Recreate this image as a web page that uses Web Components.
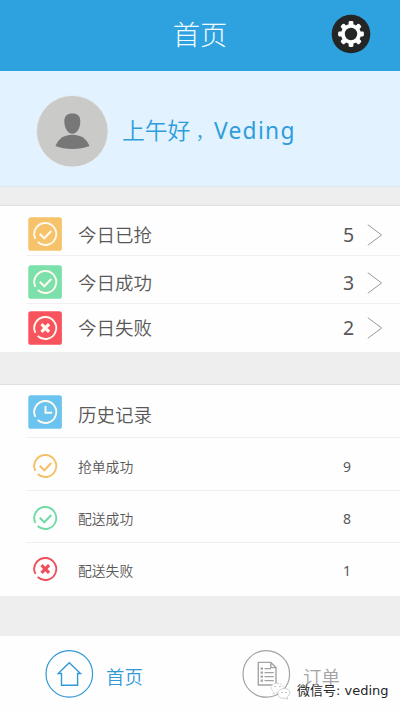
<!DOCTYPE html>
<html lang="zh-CN">
<head>
<meta charset="utf-8">
<title>首页</title>
<style>
html,body{margin:0;height:100%;overflow:hidden}
body{font-family:"Noto Sans","Noto Sans CJK SC",sans-serif;font-weight:350;color:#595757;background:#eeeeef}
</style>
</head>
<body>
<home-app></home-app>
<script>
const define = (name, css, html) => customElements.define(name, class extends HTMLElement {
  connectedCallback() {
    if (this.shadowRoot) return;
    const root = this.attachShadow({ mode: 'open' });
    root.innerHTML = `<style>:host{display:block;box-sizing:border-box}*{box-sizing:border-box}svg{display:block;flex:none}${css}</style>` +
      (typeof html === 'function' ? html(this) : html);
  }
});

const ring = '<path d="M-9.9 4.9A11 11 0 1 1 -7.6 8" />';
const marks = {
  check: '<path d="M-5.5 -.2L-1 4.2L6 -3" stroke-width="2.1"/>',
  cross: '<path d="M-3.8 -3.8L3.8 3.8M3.8 -3.8L-3.8 3.8" stroke-width="3.2"/>',
  clock: '<path d="M.2 -6V.7H6.8" stroke-width="1.9"/>'
};

define('status-icon', ':host{width:34px;height:34px}', el => {
  const filled = el.hasAttribute('filled'), c = el.getAttribute('color');
  return `<svg width="34" height="34" viewBox="-17.3 -17 34 34" fill="none">
    ${filled ? `<rect x="-17" y="-16.8" width="33.6" height="33.6" rx="2.6" fill="${c}"/>` : ''}
    <g stroke="${filled ? '#fff9ef' : c}" stroke-width="1.9">${ring}${marks[el.getAttribute('mark')]}</g></svg>`;
});

define('app-header',
  `:host{height:71px;background:#2ea2df;color:#f2faff;display:grid;grid-template-columns:1fr auto 1fr;align-items:center;padding-bottom:3px}
   .t{grid-column:2;font-size:27.3px;line-height:40px;font-weight:300;padding-top:1px}
   svg{justify-self:end;margin-right:29px}`,
  () => {
    let teeth = '';
    for (let i = 0; i < 8; i++) teeth += `<rect x="-2.4" y="-12.9" width="4.8" height="6" rx="1.3" transform="rotate(${i * 45})"/>`;
    return `<div class="t"><slot></slot></div>
    <svg width="40" height="40" viewBox="-20 -20 40 40"><circle r="19.3" fill="#242625"/>
    <g fill="#fff"><circle r="10"/>${teeth}</g><circle r="6.2" fill="#242625"/></svg>`;
  });

define('user-greeting',
  `:host{height:116px;background:#e2f2ff;border-bottom:1px solid #dce8f2;display:flex;align-items:center;padding:6px 0 0 36px;color:#2f9ddb}
   .g{margin-left:13px;padding-bottom:1px;font-size:22.8px;line-height:32px;white-space:nowrap}
   ::slotted(.comma){display:inline-block;width:18.5px;font-size:18.5px;margin-left:5px}
   ::slotted(.name){display:inline-block;font-weight:400;letter-spacing:1.3px}`,
  `<svg width="73" height="73" viewBox="0 0 73 73"><circle cx="36.3" cy="36.3" r="35.8" fill="#cacac9" stroke="#e9f0f5" stroke-width=".8"/>
   <path d="M28.3 26.5C28.2 21 31.4 18.4 36.4 18.4S44.5 21 44.3 26.5C44.2 33 41.2 38.8 36.4 38.8S28.5 33 28.3 26.5Z" fill="#777"/>
   <path d="M19.4 51C23 43 28.5 39.8 36.4 39.8S50 43 53.5 51C44 55 29 55 19.4 51Z" fill="#777"/></svg>
   <div class="g"><slot></slot></div>`);

define('list-card', ':host{background:#fefefe;box-shadow:0 -1px 1px #e0dfe2}', '<slot></slot>');

define('list-row',
  `:host{display:grid;grid-template-columns:78px 1fr 70px;align-items:start;height:var(--h);line-height:28px;font-size:18.5px}
   :host([line]){background:linear-gradient(#f1eff1,#f1eff1) right bottom/calc(100% - 26px) 1.5px no-repeat}
   :host([small]){font-size:13.8px}
   .i{padding:var(--i) 0 0 28px}
   .l,.n{padding-top:var(--t)}
   .n{display:flex;align-items:center;font-size:19.5px;font-weight:400;padding-left:13px}
   :host([small]) .n{font-size:14px}
   ::slotted([slot=count]){font-weight:400}
   .n svg{margin-left:13px}`,
  el => `<div class="i"><slot name="icon"></slot></div><div class="l"><slot></slot></div><div class="n"><slot name="count"></slot>${
    el.hasAttribute('arrow') ? '<svg width="16" height="22" viewBox="0 0 16 22" fill="none" stroke="#999" stroke-width="1"><path d="M.8 .7L14.6 11L.8 21.3"/></svg>' : ''}</div>`);

define('tab-item',
  `:host{display:flex;align-items:flex-start;font-size:18.4px;line-height:28px}
   .l{margin:14px 0 0 12px}`,
  el => `<svg width="49" height="49" viewBox="0 0 49 49" fill="none" stroke="currentColor" stroke-width="1.2"><circle cx="24.3" cy="24.9" r="23.3"/>${
    el.getAttribute('icon') === 'home'
      ? '<path d="M16.5 24.5H13.2L24.3 13.7L35.5 24.5H32.6V36.2H16.5Z" stroke-width="1.4"/>'
      : '<path d="M16.3 13.4H28.8L34 18.6V36H16.3ZM28.8 13.4V18.6H34" stroke-width="1.4"/><path d="M22.5 19.6H29M22.5 23.6H31.8M22.5 27.6H31.8M22.5 31.6H31.8" stroke-width="1.2"/><path d="M18.6 19.6H21M18.6 23.6H21M18.6 27.6H21M18.6 31.6H21" stroke-width="2.2"/>'
  }</svg><div class="l"><slot></slot></div>`);

define('tab-bar',
  ':host{height:75px;background:#fefefe;display:grid;grid-template-columns:197px 1fr;padding:13px 0 0 45px}',
  '<slot></slot>');

define('account-mark',
  `:host{position:absolute;left:270px;top:681px;display:flex;align-items:center;color:#242424;font:13px/20px "DejaVu Sans","Noto Sans CJK SC",sans-serif;white-space:nowrap}
   .t{margin-left:6px}`,
  `<svg width="21" height="20" viewBox="0 0 21 20" fill="#fff" stroke="#bbb" stroke-width=".7"><path d="M3 13.2L3.4 10.7C-.8 7 1.2 2.3 7 2.3S14.8 6 13.5 9.4 7 12.2 5.5 11.6Z" stroke-dasharray="2 1"/><path d="M17.5 18.3L15.5 17C10.7 18.3 7.5 15.5 8 11.9S13 6.8 17 8 20.5 13.5 17.2 16Z"/><path d="M5 5V6M10 5V6M12 11V12M16 11V12" stroke="#aaa" stroke-width="1.4"/></svg>
   <div class="t"><slot></slot></div>`);

define('home-app',
  `:host{width:400px;height:711px;position:relative;display:flex;flex-direction:column}
   :host>*{flex:none}
   .today{margin-top:19px;height:146px}
   .history{margin-top:33px;height:211px}
   tab-bar{margin-top:40px}`,
  `<app-header>首页</app-header>
   <user-greeting>上午好<span class="comma">，</span><span class="name">Veding</span></user-greeting>
   <list-card class="today">
     <list-row arrow line style="--h:50px;--i:10.5px;--t:14.6px"><status-icon slot="icon" filled mark="check" color="#f6c36b"></status-icon>今日已抢<span slot="count">5</span></list-row>
     <list-row arrow line style="--h:48px;--i:9px;--t:13px"><status-icon slot="icon" filled mark="check" color="#7ce0aa"></status-icon>今日成功<span slot="count">3</span></list-row>
     <list-row arrow style="--h:48px;--i:7px;--t:9.6px"><status-icon slot="icon" filled mark="cross" color="#f9545e"></status-icon>今日失败<span slot="count">2</span></list-row>
   </list-card>
   <list-card class="history">
     <list-row line style="--h:53px;--i:9.5px;--t:16px"><status-icon slot="icon" filled mark="clock" color="#6bc4ef"></status-icon>历史记录</list-row>
     <list-row small line style="--h:53px;--i:11px;--t:15px"><status-icon slot="icon" mark="check" color="#f5c065"></status-icon>抢单成功<span slot="count">9</span></list-row>
     <list-row small line style="--h:52px;--i:10px;--t:14px"><status-icon slot="icon" mark="check" color="#70dba6"></status-icon>配送成功<span slot="count">8</span></list-row>
     <list-row small style="--h:53px;--i:9px;--t:14px"><status-icon slot="icon" mark="cross" color="#ef4f5a"></status-icon>配送失败<span slot="count">1</span></list-row>
   </list-card>
   <tab-bar><tab-item icon="home" style="color:#3199d8">首页</tab-item><tab-item icon="orders" style="color:#a3a3a5">订单</tab-item></tab-bar>
   <account-mark>微信号: veding</account-mark>`);
</script>
</body>
</html>
